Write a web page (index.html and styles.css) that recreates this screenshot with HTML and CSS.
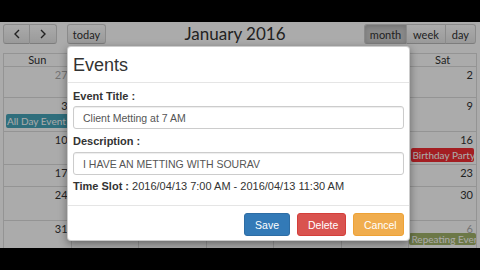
FILE: index.html
```html
<!DOCTYPE html>
<html lang="en">
<head>
    <meta charset="UTF-8">
    <title>Calendar Events</title>
    <link rel="stylesheet" href="styles.css">
</head>
<body>
<div class="screen">
    <div class="toolbar">
        <div class="tb-left">
            <div class="btn-group">
                <button class="fc-btn arrow">
                    <svg width="8" height="10" viewBox="0 0 8 10"><polyline points="6,1 2,5 6,9" fill="none" stroke="#333" stroke-width="1.4"/></svg>
                </button>
                <button class="fc-btn arrow">
                    <svg width="8" height="10" viewBox="0 0 8 10"><polyline points="2,1 6,5 2,9" fill="none" stroke="#333" stroke-width="1.4"/></svg>
                </button>
            </div>
            <button class="fc-btn today">today</button>
        </div>
        <h2 class="title">January 2016</h2>
        <div class="btn-group">
            <button class="fc-btn active">month</button>
            <button class="fc-btn">week</button>
            <button class="fc-btn">day</button>
        </div>
    </div>

    <div class="grid">
        <div class="hd">Sun</div><div class="hd">Mon</div><div class="hd">Tue</div><div class="hd">Wed</div><div class="hd">Thu</div><div class="hd">Fri</div><div class="hd">Sat</div>

        <div class="day other"><span class="num">27</span></div>
        <div class="day other"><span class="num">28</span></div>
        <div class="day other"><span class="num">29</span></div>
        <div class="day other"><span class="num">30</span></div>
        <div class="day other"><span class="num">31</span></div>
        <div class="day"><span class="num">1</span></div>
        <div class="day"><span class="num">2</span></div>

        <div class="day"><span class="num">3</span><div class="ev ev-blue">All Day Event</div></div>
        <div class="day"><span class="num">4</span></div>
        <div class="day"><span class="num">5</span></div>
        <div class="day"><span class="num">6</span></div>
        <div class="day"><span class="num">7</span></div>
        <div class="day"><span class="num">8</span></div>
        <div class="day"><span class="num">9</span></div>

        <div class="day"><span class="num">10</span></div>
        <div class="day"><span class="num">11</span></div>
        <div class="day"><span class="num">12</span></div>
        <div class="day"><span class="num">13</span></div>
        <div class="day"><span class="num">14</span></div>
        <div class="day"><span class="num">15</span></div>
        <div class="day"><span class="num">16</span><div class="ev ev-red">Birthday Party</div></div>

        <div class="day"><span class="num">17</span></div>
        <div class="day"><span class="num">18</span></div>
        <div class="day"><span class="num">19</span></div>
        <div class="day"><span class="num">20</span></div>
        <div class="day"><span class="num">21</span></div>
        <div class="day"><span class="num">22</span></div>
        <div class="day"><span class="num">23</span></div>

        <div class="day"><span class="num">24</span></div>
        <div class="day"><span class="num">25</span></div>
        <div class="day"><span class="num">26</span></div>
        <div class="day"><span class="num">27</span></div>
        <div class="day"><span class="num">28</span></div>
        <div class="day"><span class="num">29</span></div>
        <div class="day"><span class="num">30</span></div>

        <div class="day"><span class="num">31</span></div>
        <div class="day other"><span class="num">1</span></div>
        <div class="day other"><span class="num">2</span></div>
        <div class="day other"><span class="num">3</span></div>
        <div class="day other"><span class="num">4</span></div>
        <div class="day other"><span class="num">5</span></div>
        <div class="day other"><span class="num">6</span><div class="ev ev-olive">Repeating Event</div></div>
    </div>

    <div class="backdrop"></div>

    <div class="modal">
        <div class="modal-header">Events</div>
        <div class="modal-body">
            <label class="lbl">Event Title :</label>
            <input type="text" class="field" value="Client Metting at 7 AM">
            <label class="lbl lbl2">Description :</label>
            <input type="text" class="field" value="I HAVE AN METTING WITH SOURAV">
            <p class="slot"><b>Time Slot :</b> 2016/04/13 7:00 AM - 2016/04/13 11:30 AM</p>
        </div>
        <div class="modal-footer">
            <button class="btn btn-save">Save</button>
            <button class="btn btn-delete">Delete</button>
            <button class="btn btn-cancel">Cancel</button>
        </div>
    </div>
</div>
</body>
</html>
```

FILE: styles.css
```css
body {
    margin: 0;
    background: #000;
    font-family: Lato, "Liberation Sans", sans-serif;
}

.screen {
    position: relative;
    margin-top: 22px;
    height: 226px;
    overflow: hidden;
    background: #fff;
    color: #333;
}

.toolbar {
    display: flex;
    justify-content: space-between;
    align-items: center;
    padding: 2px 4px 0 3px;
    height: 20px;
    margin-bottom: 9px;
}
.tb-left {
    display: flex;
    gap: 10px;
}
.btn-group {
    display: flex;
}
.fc-btn {
    height: 20px;
    margin: 0;
    padding: 0 6px;
    font-family: Lato, sans-serif;
    font-size: 11px;
    color: #333;
    background: linear-gradient(#fff, #e6e6e6);
    border: 1px solid #d0d0d0;
    border-bottom-color: #bbb;
    border-radius: 0;
    display: flex;
    align-items: center;
    justify-content: center;
}
.btn-group .fc-btn + .fc-btn {
    border-left: 0;
}
.btn-group .fc-btn:first-child {
    border-radius: 3px 0 0 3px;
}
.btn-group .fc-btn:last-child {
    border-radius: 0 3px 3px 0;
}
.fc-btn.arrow {
    width: 27px;
}
.fc-btn.today {
    width: 39px;
    border-radius: 3px;
}
.fc-btn.active {
    background: #ccc;
    box-shadow: inset 0 2px 4px rgba(0,0,0,.15);
    width: 43px;
}
.title {
    margin: 0;
    font-size: 17px;
    font-weight: 400;
    line-height: 20px;
}

.grid {
    display: grid;
    grid-template-columns: repeat(7, 1fr);
    grid-template-rows: 12px 30px 33px 32px 21px 33px 40px;
    gap: 1px;
    margin: 0 3px 0 3px;
    border: 1px solid #ddd;
    background: #ddd;
}
.hd {
    background: #fff;
    font-size: 11px;
    line-height: 12px;
    text-align: center;
}
.day {
    background: #fff;
    font-size: 11px;
    overflow: hidden;
    white-space: nowrap;
}
.num {
    display: block;
    text-align: right;
    padding: 1px 3px 0 0;
    line-height: 14px;
}
.other .num {
    opacity: .4;
}
.ev {
    margin: 1px 2px 0;
    padding: 0 1px;
    font-size: 10px;
    line-height: 14px;
    color: #fff;
    border-radius: 2px;
    overflow: hidden;
}
.ev-blue { background: #46a4ba; }
.ev-red { background: #f42e33; }
.ev-olive {
    background: #a2b36a;
    margin: -3px 0 0;
    line-height: 12px;
    padding: 0 2px;
}

.backdrop {
    position: absolute;
    inset: 0;
    background: rgba(0,0,0,.33);
}

.modal {
    position: absolute;
    left: 67px;
    top: 24px;
    width: 341px;
    background: #fff;
    border: 1px solid rgba(0,0,0,.2);
    border-radius: 4px;
    box-shadow: 0 3px 8px rgba(0,0,0,.4);
    font-family: "Liberation Sans", Arial, sans-serif;
    color: #333;
}
.modal-header {
    padding: 9px 5px 8px;
    font-size: 18px;
    line-height: 18px;
    border-bottom: 1px solid #e5e5e5;
}
.modal-body {
    padding: 6px 5px 12px;
    display: flex;
    flex-direction: column;
}
.lbl {
    font-size: 11px;
    font-weight: bold;
    line-height: 14px;
}
.lbl2 {
    margin-top: 5px;
}
.field {
    box-sizing: border-box;
    width: 100%;
    height: 23px;
    margin: 3px 0 0;
    padding: 0 9px;
    font-family: "Liberation Sans", Arial, sans-serif;
    font-size: 10.5px;
    color: #555;
    border: 1px solid #ccc;
    border-radius: 3px;
    box-shadow: inset 0 1px 1px rgba(0,0,0,.075);
}
.lbl + .field {
    margin-top: 3px;
}
.lbl2 + .field {
    margin-top: 4px;
}
.slot {
    margin: 4px 0 0;
    font-size: 11px;
    line-height: 14px;
}
.modal-footer {
    display: flex;
    justify-content: flex-end;
    gap: 7px;
    padding: 7px 5px 4px;
    border-top: 1px solid #e5e5e5;
}
.btn {
    height: 23px;
    padding: 0 10px;
    font-family: "Liberation Sans", Arial, sans-serif;
    font-size: 10.5px;
    color: #fff;
    border: 1px solid transparent;
    border-radius: 3px;
}
.btn-save { background: #337ab7; border-color: #2e6da4; }
.btn-delete { background: #d9534f; border-color: #d43f3a; width: 49px; }
.btn-cancel { background: #f0ad4e; border-color: #eea236; width: 51px; }
```
